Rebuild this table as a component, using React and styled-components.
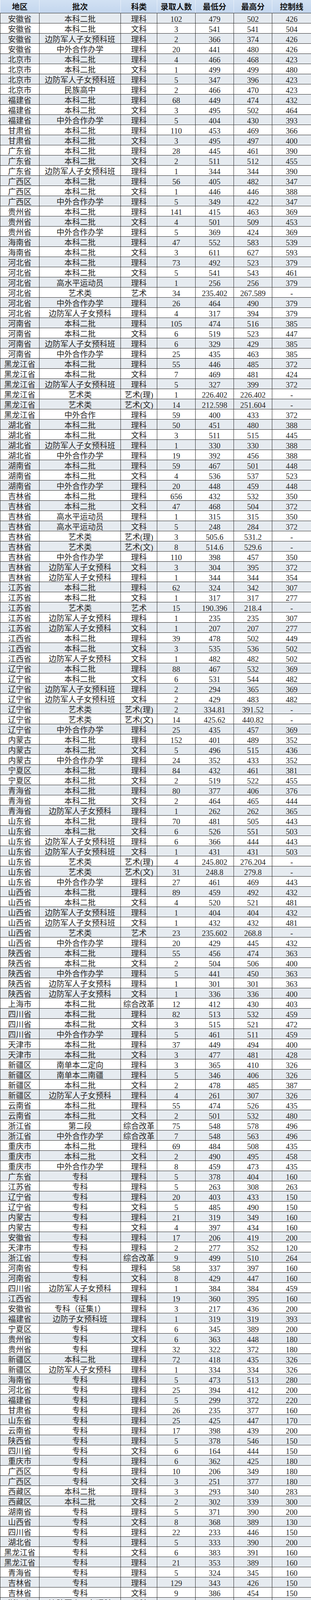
import React from "react";
import styled, { createGlobalStyle } from "styled-components";

const GlobalStyle = createGlobalStyle`
  html, body { margin: 0; padding: 0; background: #ffffff; }
  body { width: 795px; }
`;

const COLS = "101px 208px 93px 98px 98px 98px 99px";

const Table = styled.div`
  width: 795px;
  display: flex;
  flex-direction: column;
  font-family: "Liberation Serif", "Noto Sans CJK SC", serif;
`;

const HeaderRow = styled.div`
  display: grid;
  grid-template-columns: ${COLS};
  height: 34px;
  background: linear-gradient(#d2e1f3, #c3d6ee);
  border-bottom: 1px solid #2a2a2a;
  box-sizing: border-box;
`;

const HeadCell = styled.div`
  box-sizing: border-box;
  padding-top: 7px;
  line-height: 20px;
  text-align: center;
  font-family: "Noto Sans CJK SC", "Noto Sans", sans-serif;
  font-weight: 700;
  font-size: 20px;
  color: #141414;
  border-right: ${(p) => (p.$last ? "none" : "1px solid #edf3fb")};
  border-left: ${(p) => (p.$first ? "1px solid #edf3fb" : "none")};
  white-space: nowrap;
`;

const Row = styled.div`
  display: grid;
  grid-template-columns: ${COLS};
  height: 26px;
  box-sizing: border-box;
  border-bottom: 1px solid #262626;
  background: ${(p) => (p.$shaded ? "#e6ebf0" : "#ffffff")};
`;

const Cell = styled.div`
  box-sizing: border-box;
  padding-top: 6px;
  line-height: 18px;
  font-size: 20px;
  text-align: center;
  color: #262626;
  white-space: nowrap;
  border-right: ${(p) => (p.$last ? "none" : "1px solid #262626")};
  border-left: ${(p) => (p.$first ? "1px solid #262626" : "none")};
`;

const HEAD = ["地区", "批次", "科类", "录取人数", "最低分", "最高分", "控制线"];

const RAW = `安徽省|本科二批|理科|102|479|502|426
安徽省|本科二批|文科|3|541|541|504
安徽省|边防军人子女预科班|理科|2|366|374|426
安徽省|中外合作办学|理科|20|441|480|426
北京市|本科二批|理科|4|466|468|423
北京市|本科二批|文科|1|499|499|480
北京市|边防军人子女预科班|理科|5|347|396|423
北京市|民族高中|理科|2|466|470|423
福建省|本科二批|理科|68|449|474|432
福建省|本科二批|文科|3|495|502|464
福建省|中外合作办学|理科|5|404|430|393
甘肃省|本科二批|理科|110|453|469|366
甘肃省|本科二批|文科|3|495|497|400
广东省|本科二批|理科|28|445|461|390
广东省|本科二批|文科|2|511|512|455
广东省|边防军人子女预科班|理科|1|344|344|390
广西区|本科二批|理科|56|405|482|347
广西区|本科二批|文科|1|446|446|388
广西区|中外合作办学|理科|5|349|422|347
贵州省|本科二批|理科|141|415|463|369
贵州省|本科二批|文科|4|501|509|453
贵州省|中外合作办学|理科|5|369|424|369
海南省|本科二批|理科|47|552|583|539
海南省|本科二批|文科|3|611|627|593
河北省|本科二批|理科|73|492|523|379
河北省|本科二批|文科|5|541|543|461
河北省|高水平运动员|理科|1|256|256|379
河北省|艺术类|艺术|34|235.402|267.589|-
河北省|中外合作办学|理科|26|464|490|379
河北省|边防军人子女预科|理科|4|317|394|379
河南省|本科二批|理科|105|474|516|385
河南省|本科二批|文科|6|519|523|447
河南省|边防军人子女预科班|理科|6|329|429|385
河南省|中外合作办学|理科|25|435|463|385
黑龙江省|本科二批|理科|55|446|485|372
黑龙江省|本科二批|文科|7|469|481|424
黑龙江省|边防军人子女预科班|理科|5|327|399|372
黑龙江省|艺术类|艺术(理)|1|226.402|226.402|-
黑龙江省|艺术类|艺术(文)|14|212.598|251.604|-
黑龙江省|中外合作|理科|59|400|433|372
湖北省|本科二批|理科|50|451|480|388
湖北省|本科二批|文科|3|511|515|445
湖北省|边防军人子女预科班|理科|1|330|330|388
湖北省|中外合作办学|理科|19|392|456|388
湖南省|本科二批|理科|59|467|501|448
湖南省|本科二批|文科|4|536|537|523
湖南省|中外合作办学|理科|20|448|459|448
吉林省|本科二批|理科|656|432|532|350
吉林省|本科二批|文科|47|468|504|372
吉林省|高水平运动员|理科|1|315|315|350
吉林省|高水平运动员|文科|5|248|284|372
吉林省|艺术类|艺术(理)|3|505.6|531.2|-
吉林省|艺术类|艺术(文)|8|514.6|529.6|-
吉林省|中外合作办学|理科|110|398|457|350
吉林省|边防军人子女预科|文科|3|304|395|372
吉林省|边防军人子女预科|理科|1|344|344|354
江苏省|本科二批|理科|62|324|342|307
江苏省|本科二批|文科|1|317|317|277
江苏省|艺术类|艺术|15|190.396|218.4|-
江苏省|边防军人子女预科|理科|1|235|235|307
江苏省|边防军人子女预科|文科|1|207|207|277
江西省|本科二批|理科|39|478|502|449
江西省|本科二批|文科|3|535|536|502
江西省|边防军人子女预科|文科|1|482|482|502
辽宁省|本科二批|理科|88|467|532|369
辽宁省|本科二批|文科|6|531|544|482
辽宁省|边防军人子女预科班|理科|2|294|365|369
辽宁省|边防军人子女预科班|文科|2|429|483|482
辽宁省|艺术类|艺术(理)|2|334.81|391.52|-
辽宁省|艺术类|艺术(文)|14|425.62|440.82|-
辽宁省|中外合作办学|理科|25|435|457|369
内蒙古|本科二批|理科|152|401|489|352
内蒙古|本科二批|文科|5|496|515|436
内蒙古|中外合作办学|理科|24|352|433|352
宁夏区|本科二批|理科|84|432|461|381
宁夏区|本科二批|文科|2|519|522|455
青海省|本科二批|理科|80|377|406|376
青海省|本科二批|文科|2|464|465|444
青海省|边防军人子女预科|理科|1|262|262|365
山东省|本科二批|理科|70|481|505|443
山东省|本科二批|文科|6|526|551|503
山东省|边防军人子女预科班|理科|6|366|444|443
山东省|边防军人子女预科班|文科|1|431|431|503
山东省|艺术类|艺术(理)|4|245.802|276.204|-
山东省|艺术类|艺术(文)|31|248.8|279.8|-
山东省|中外合作办学|理科|27|461|469|443
山西省|本科二批|理科|89|459|492|432
山西省|本科二批|文科|4|520|521|481
山西省|边防军人子女预科班|理科|1|404|404|432
山西省|边防军人子女预科班|文科|1|432|432|481
山西省|艺术类|艺术|23|235.602|268.8|-
山西省|中外合作办学|理科|20|429|445|432
陕西省|本科二批|理科|55|456|474|363
陕西省|本科二批|文科|2|504|506|400
陕西省|中外合作办学|理科|5|441|450|363
陕西省|边防军人子女预科|理科|1|301|301|363
陕西省|边防军人子女预科|文科|1|336|336|400
上海市|本科二批|综合改革|12|412|430|403
四川省|本科二批|理科|82|513|532|459
四川省|本科二批|文科|3|515|521|472
四川省|中外合作办学|理科|5|461|511|459
天津市|本科二批|理科|37|449|494|400
天津市|本科二批|文科|3|477|481|428
新疆区|南单本二定向|理科|3|365|410|326
新疆区|南单本二南疆|理科|5|346|406|326
新疆区|本科二批|文科|2|478|485|387
新疆区|边防军人子女预科|理科|4|261|307|326
云南省|本科二批|理科|55|474|526|435
云南省|本科二批|文科|2|501|532|480
浙江省|第二段|综合改革|75|548|578|496
浙江省|中外合作办学|综合改革|7|548|563|496
重庆市|本科二批|理科|69|484|508|435
重庆市|本科二批|文科|2|490|495|458
重庆市|中外合作办学|理科|8|459|473|435
广东省|专科|理科|5|378|404|160
江苏省|专科|理科|5|263|308|263
辽宁省|专科|理科|20|403|433|150
辽宁省|专科|文科|5|485|490|150
内蒙古|专科|理科|21|319|349|160
内蒙古|专科|文科|4|397|434|160
安徽省|专科|理科|17|206|419|200
天津市|专科|理科|2|277|352|120
浙江省|专科|综合改革|9|499|510|264
河南省|专科|理科|58|337|397|160
河南省|专科|文科|8|429|447|160
四川省|边防军人子女预科|理科|1|384|384|459
江西省|专科|理科|19|360|395|160
安徽省|专科（征集1）|理科|3|217|436|200
福建省|边防子女预科班|理科|1|319|319|393
宁夏区|专科|理科|6|345|389|200
贵州省|专科|文科|6|363|448|180
贵州省|专科|理科|32|322|372|180
新疆区|本科二批|理科|72|418|435|326
新疆区|边防军人子女预科|理科|1|334|334|326
海南省|专科|理科|5|473|513|280
河北省|专科|理科|25|394|412|200
福建省|专科|理科|5|299|372|220
甘肃省|专科|理科|26|235|377|160
山东省|专科|理科|25|425|447|170
云南省|专科|理科|17|398|439|200
陕西省|专科|理科|5|378|546|150
四川省|专科|文科|6|164|444|150
重庆市|专科|理科|6|362|425|180
广西区|专科|理科|10|206|349|180
广西区|专科|文科|3|251|377|180
西藏区|本科二批|理科|3|293|340|283
西藏区|本科二批|文科|2|302|339|300
湖南省|专科|理科|5|371|390|200
山西省|专科|文科|8|368|389|130
四川省|专科|理科|22|233|446|150
湖北省|专科|理科|5|333|390|200
黑龙江省|专科|文科|6|383|391|160
黑龙江省|专科|理科|21|353|389|160
青海省|专科|理科|5|324|345|160
吉林省|专科|理科|129|343|426|150
吉林省|专科|文科|9|386|454|150
浙江省|边防军人子女预科|理科|2|426|447|496
山西省|专科|理科|24|180|374|130
新疆区|专科|理科|20|281|361|180`;

const ROWS = RAW.split("\n").map((line) => line.split("|"));

export default function App() {
  return (
    <>
      <GlobalStyle />
      <Table>
        <HeaderRow>
          {HEAD.map((h, i) => (
            <HeadCell key={h} $first={i === 0} $last={i === HEAD.length - 1}>
              {h}
            </HeadCell>
          ))}
        </HeaderRow>
        {ROWS.map((r, idx) => (
          <Row key={idx} $shaded={idx % 2 === 0}>
            {r.map((c, i) => (
              <Cell key={i} $first={i === 0} $last={i === r.length - 1}>
                {c}
              </Cell>
            ))}
          </Row>
        ))}
      </Table>
    </>
  );
}
